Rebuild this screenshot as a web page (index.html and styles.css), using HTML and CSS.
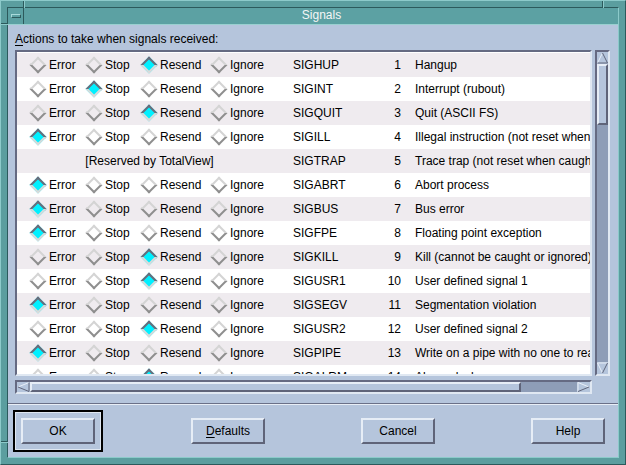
FILE: index.html
```html
<!DOCTYPE html>
<html>
<head>
<meta charset="utf-8">
<link rel="stylesheet" href="styles.css">
</head>
<body>
<div class="window">
  <span class="mark mv ml"></span><span class="mark mv mr"></span>
  <span class="mark mh mt"></span><span class="mark mh mb"></span>
  <div class="inner">
    <div class="titlebar">
      <div class="menubtn"><span class="menubar"></span></div>
      <div class="title">Signals</div>
    </div>
    <div class="content">
      <div class="label"><u>A</u>ctions to take when signals received:</div>
      <div class="scroll">
        <div class="list">
          <div class="row"><span class="opt"><i class="rb"></i>Error</span><span class="opt"><i class="rb"></i>Stop</span><span class="opt"><i class="rb on"></i>Resend</span><span class="opt"><i class="rb"></i>Ignore</span><span>SIGHUP</span><span class="num">1</span><span class="desc">Hangup</span></div>
          <div class="row"><span class="opt"><i class="rb"></i>Error</span><span class="opt"><i class="rb on"></i>Stop</span><span class="opt"><i class="rb"></i>Resend</span><span class="opt"><i class="rb"></i>Ignore</span><span>SIGINT</span><span class="num">2</span><span class="desc">Interrupt (rubout)</span></div>
          <div class="row"><span class="opt"><i class="rb"></i>Error</span><span class="opt"><i class="rb"></i>Stop</span><span class="opt"><i class="rb on"></i>Resend</span><span class="opt"><i class="rb"></i>Ignore</span><span>SIGQUIT</span><span class="num">3</span><span class="desc">Quit (ASCII FS)</span></div>
          <div class="row"><span class="opt"><i class="rb on"></i>Error</span><span class="opt"><i class="rb"></i>Stop</span><span class="opt"><i class="rb"></i>Resend</span><span class="opt"><i class="rb"></i>Ignore</span><span>SIGILL</span><span class="num">4</span><span class="desc">Illegal instruction (not reset when caught)</span></div>
          <div class="row"><span class="reserved">[Reserved by TotalView]</span><span>SIGTRAP</span><span class="num">5</span><span class="desc">Trace trap (not reset when caught)</span></div>
          <div class="row"><span class="opt"><i class="rb on"></i>Error</span><span class="opt"><i class="rb"></i>Stop</span><span class="opt"><i class="rb"></i>Resend</span><span class="opt"><i class="rb"></i>Ignore</span><span>SIGABRT</span><span class="num">6</span><span class="desc">Abort process</span></div>
          <div class="row"><span class="opt"><i class="rb on"></i>Error</span><span class="opt"><i class="rb"></i>Stop</span><span class="opt"><i class="rb"></i>Resend</span><span class="opt"><i class="rb"></i>Ignore</span><span>SIGBUS</span><span class="num">7</span><span class="desc">Bus error</span></div>
          <div class="row"><span class="opt"><i class="rb on"></i>Error</span><span class="opt"><i class="rb"></i>Stop</span><span class="opt"><i class="rb"></i>Resend</span><span class="opt"><i class="rb"></i>Ignore</span><span>SIGFPE</span><span class="num">8</span><span class="desc">Floating point exception</span></div>
          <div class="row"><span class="opt"><i class="rb"></i>Error</span><span class="opt"><i class="rb"></i>Stop</span><span class="opt"><i class="rb on"></i>Resend</span><span class="opt"><i class="rb"></i>Ignore</span><span>SIGKILL</span><span class="num">9</span><span class="desc">Kill (cannot be caught or ignored)</span></div>
          <div class="row"><span class="opt"><i class="rb"></i>Error</span><span class="opt"><i class="rb"></i>Stop</span><span class="opt"><i class="rb on"></i>Resend</span><span class="opt"><i class="rb"></i>Ignore</span><span>SIGUSR1</span><span class="num">10</span><span class="desc">User defined signal 1</span></div>
          <div class="row"><span class="opt"><i class="rb on"></i>Error</span><span class="opt"><i class="rb"></i>Stop</span><span class="opt"><i class="rb"></i>Resend</span><span class="opt"><i class="rb"></i>Ignore</span><span>SIGSEGV</span><span class="num">11</span><span class="desc">Segmentation violation</span></div>
          <div class="row"><span class="opt"><i class="rb"></i>Error</span><span class="opt"><i class="rb"></i>Stop</span><span class="opt"><i class="rb on"></i>Resend</span><span class="opt"><i class="rb"></i>Ignore</span><span>SIGUSR2</span><span class="num">12</span><span class="desc">User defined signal 2</span></div>
          <div class="row"><span class="opt"><i class="rb on"></i>Error</span><span class="opt"><i class="rb"></i>Stop</span><span class="opt"><i class="rb"></i>Resend</span><span class="opt"><i class="rb"></i>Ignore</span><span>SIGPIPE</span><span class="num">13</span><span class="desc">Write on a pipe with no one to read it</span></div>
          <div class="row"><span class="opt"><i class="rb"></i>Error</span><span class="opt"><i class="rb"></i>Stop</span><span class="opt"><i class="rb on"></i>Resend</span><span class="opt"><i class="rb"></i>Ignore</span><span>SIGALRM</span><span class="num">14</span><span class="desc">Alarm clock</span></div>
        </div>
        <div class="vbar">
          <svg class="arrow" width="11" height="12" viewBox="0 0 11 12"><polygon points="5.5,1 10.5,11 0.5,11" fill="#b5c5dc"/><polyline points="0.5,11 5.5,1" stroke="#e8eef7" fill="none"/><polyline points="5.5,1 10.5,11 0.5,11" stroke="#5f6479" fill="none"/></svg>
          <div class="vthumb"></div>
          <div class="trough"></div>
          <svg class="arrow" width="11" height="12" viewBox="0 0 11 12"><polygon points="0.5,1 10.5,1 5.5,11" fill="#b5c5dc"/><polyline points="10.5,1 0.5,1 5.5,11" stroke="#e8eef7" fill="none"/><polyline points="5.5,11 10.5,1" stroke="#5f6479" fill="none"/></svg>
        </div>
        <div class="hbar">
          <svg class="arrow" width="13" height="10" viewBox="0 0 13 10"><polygon points="1,5 12,0.5 12,9.5" fill="#b5c5dc"/><polyline points="12,0.5 1,5" stroke="#e8eef7" fill="none"/><polyline points="1,5 12,9.5 12,0.5" stroke="#5f6479" fill="none"/></svg>
          <div class="hthumb"></div>
          <div class="trough"></div>
          <svg class="arrow" width="13" height="10" viewBox="0 0 13 10"><polygon points="1,0.5 12,5 1,9.5" fill="#b5c5dc"/><polyline points="1,9.5 1,0.5 12,5" stroke="#e8eef7" fill="none"/><polyline points="12,5 1,9.5" stroke="#5f6479" fill="none"/></svg>
        </div>
      </div>
      <div class="sep"></div>
      <div class="buttons">
        <div class="btn default">OK</div>
        <div class="btn"><span><u>D</u>efaults</span></div>
        <div class="btn">Cancel</div>
        <div class="btn">Help</div>
      </div>
    </div>
  </div>
</div>
</body>
</html>
```
FILE: styles.css
```css
* { box-sizing: border-box; }
body {
  margin: 0;
  font-family: "Liberation Sans", Arial, sans-serif;
  font-size: 12px;
  color: #000;
  background: #5b9e9f;
}
.window {
  position: relative;
  width: 626px;
  height: 465px;
  background: #5b9e9f;
  border: 1px solid;
  border-color: #8ccaca #2c5a5c #2c5a5c #8ccaca;
  padding: 6px;
  display: flex;
}
.mark { position: absolute; background: #2c5a5c; }
.mv { width: 1px; height: 7px; box-shadow: 1px 0 0 #8ccaca; }
.mh { width: 7px; height: 1px; box-shadow: 0 1px 0 #8ccaca; }
.ml { left: 22px; top: 0; }
.mr { right: 22px; top: 0; }
.mt { left: 0; top: 22px; }
.mb { left: 0; bottom: 22px; }
.inner {
  flex: 1;
  display: flex;
  flex-direction: column;
  border: 1px solid;
  border-color: #2c5a5c #8ccaca #8ccaca #2c5a5c;
}
.titlebar {
  height: 17px;
  display: flex;
  background: #5ca1a3;
  border-bottom: 1px solid #9ad0d0;
}
.menubtn {
  width: 16px;
  border-right: 1px solid #2c5a5c;
  display: flex;
  align-items: center;
  justify-content: center;
}
.menubar {
  width: 10px;
  height: 4px;
  border: 1px solid;
  border-color: #a8dada #2c5a5c #2c5a5c #a8dada;
  margin-top: -1px;
}
.title {
  flex: 1;
  text-align: center;
  color: #f4f6f6;
  line-height: 15px;
  font-size: 12px;
  padding-left: 1px;
}
.content {
  flex: 1;
  background: #b5c5dc;
  display: flex;
  flex-direction: column;
}
.label {
  margin: 7px 0 4px 7px;
  line-height: 14px;
}
.scroll {
  margin-left: 7px;
  display: grid;
  grid-template-columns: 577px 15px;
  grid-template-rows: 326px 14px;
  column-gap: 3px;
  row-gap: 4px;
}
.list {
  grid-column: 1;
  grid-row: 1;
  background: #fff;
  border: 2px solid;
  border-color: #656a82 #e0e8f2 #e0e8f2 #656a82;
  overflow: hidden;
  padding-top: 1px;
}
.row {
  display: grid;
  grid-template-columns: 56px 55px 70px 80px 80px 28px 1fr;
  height: 24px;
  align-items: center;
  padding-left: 15px;
  white-space: nowrap;
}
.row:nth-child(odd) { background: #efebef; }
.opt { display: flex; align-items: center; }
.rb {
  display: inline-flex;
  width: 12px;
  height: 12px;
  margin-right: 5px;
  align-items: center;
  justify-content: center;
}
.rb::before {
  content: "";
  width: 8px;
  height: 8px;
  border: 2px solid;
  border-color: #d4d4d4 #8e8e8e #8e8e8e #d4d4d4;
  transform: rotate(45deg);
}
.rb.on::before {
  border-color: #6a6c7a #dadada #dadada #6a6c7a;
  background: #00f0ff;
}
.reserved {
  grid-column: 1 / 5;
  text-align: center;
  padding-right: 26px;
}
.num { text-align: right; }
.desc { padding-left: 14px; overflow: hidden; }
.vbar {
  grid-column: 2;
  grid-row: 1;
  display: flex;
  flex-direction: column;
  background: #8e9db7;
  border: 2px solid;
  border-color: #656a82 #e0e8f2 #e0e8f2 #656a82;
}
.hbar {
  grid-column: 1;
  grid-row: 2;
  display: flex;
  background: #8e9db7;
  border: 2px solid;
  border-color: #656a82 #e0e8f2 #e0e8f2 #656a82;
}
.arrow { display: block; flex: none; background: #b5c5dc; }
.vthumb {
  height: 61px;
  background: #b5c5dc;
  border: 2px solid;
  border-color: #e6edf6 #5f6479 #5f6479 #e6edf6;
}
.hthumb {
  width: 491px;
  background: #b5c5dc;
  border: 2px solid;
  border-color: #e6edf6 #5f6479 #5f6479 #e6edf6;
}
.trough { flex: 1; }
.sep {
  margin-top: 9px;
  height: 2px;
  border-top: 1px solid #6a7088;
  border-bottom: 1px solid #e8eef6;
}
.buttons {
  margin-top: 13px;
  padding: 0 13px;
  display: flex;
  justify-content: space-between;
}
.btn {
  width: 74px;
  height: 26px;
  background: #b5c5dc;
  border: 2px solid;
  border-color: #e6edf6 #5f6479 #5f6479 #e6edf6;
  display: flex;
  align-items: center;
  justify-content: center;
}
.btn.default {
  outline: 2px solid #000;
  outline-offset: 6px;
  box-shadow: 0 0 0 5px #b5c5dc, 0 0 0 6px #dfe7f1;
}
u { text-decoration-thickness: 1px; text-underline-offset: 2px; }
```
